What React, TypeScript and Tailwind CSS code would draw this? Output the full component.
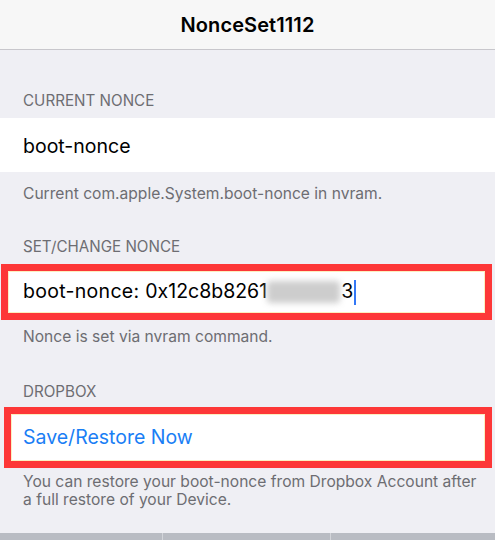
import React from "react";

const font = { fontFamily: "Inter, 'Noto Sans', 'Liberation Sans', sans-serif" };

export default function App() {
  return (
    <div className="w-[495px] h-[540px] bg-[#efeff4] overflow-hidden flex flex-col" style={font}>
      <div className="h-[50px] shrink-0 bg-[#f7f7f7] border-b border-[#c8c7cc] flex items-center justify-center">
        <span className="text-[20px] font-semibold text-black tracking-[0.1px]">NonceSet1112</span>
      </div>

      <div className="pt-[41px] pb-[7px] px-[23px] text-[15.2px] leading-[20px] text-[#6d6d72]">CURRENT NONCE</div>
      <div className="h-[54px] bg-white flex items-center px-[23px] pt-[3px]">
        <span className="text-[19.5px] text-black">boot-nonce</span>
      </div>
      <div className="pt-[12px] px-[23px] text-[15.6px] leading-[20px] text-[#6d6d72]">
        Current com.apple.System.boot-nonce in nvram.
      </div>

      <div className="pt-[33px] pb-[7px] px-[23px] text-[15.2px] leading-[20px] text-[#6d6d72]">SET/CHANGE NONCE</div>
      <div className="ml-[1px] w-[491px] h-[56px] border-[7px] border-[#fd3737] bg-white">
        <div className="h-full flex items-center pl-[15px] shadow-[inset_0_0_0_1px_#fcefc0]">
          <span className="text-[19.5px] text-black whitespace-pre tracking-[0.3px]">boot-nonce: </span>
          <span className="text-[19.5px] text-black">0x12c8b8261</span>
          <span className="inline-block w-[73px] h-[22px] bg-[#cdcdcd] blur-[3px] rounded-sm" />
          <span className="text-[19.5px] text-black ml-[1px]">3</span>
          <span className="inline-block w-[2px] h-[25px] bg-[#3478f6] ml-[1px]" />
        </div>
      </div>
      <div className="pt-[7px] px-[23px] text-[15.6px] leading-[20px] text-[#6d6d72]">
        Nonce is set via nvram command.
      </div>

      <div className="pt-[35px] pb-[5px] px-[23px] text-[15.2px] leading-[20px] text-[#6d6d72]">DROPBOX</div>
      <div className="ml-[4px] w-[488px] h-[61px] border-[7px] border-[#fd3737] bg-white">
        <div className="h-full flex items-center pl-[12px] pt-[1px] shadow-[inset_0_0_0_1px_#fcefc0]">
          <span className="text-[19.5px] text-[#1a7ef5]">Save/Restore Now</span>
        </div>
      </div>
      <div className="pt-[5px] pl-[23px] pr-[10px] text-[15.6px] leading-[18px] text-[#6d6d72]">
        You can restore your boot-nonce from Dropbox Account after a full restore of your Device.
      </div>

      <div className="flex-1" />
      <div className="h-[7px] shrink-0 bg-[#b9bcc3] flex">
        <div className="w-[163px] border-r border-[#d3d5da]" />
        <div className="w-[168px] border-r border-[#d3d5da]" />
        <div className="flex-1" />
      </div>
    </div>
  );
}
